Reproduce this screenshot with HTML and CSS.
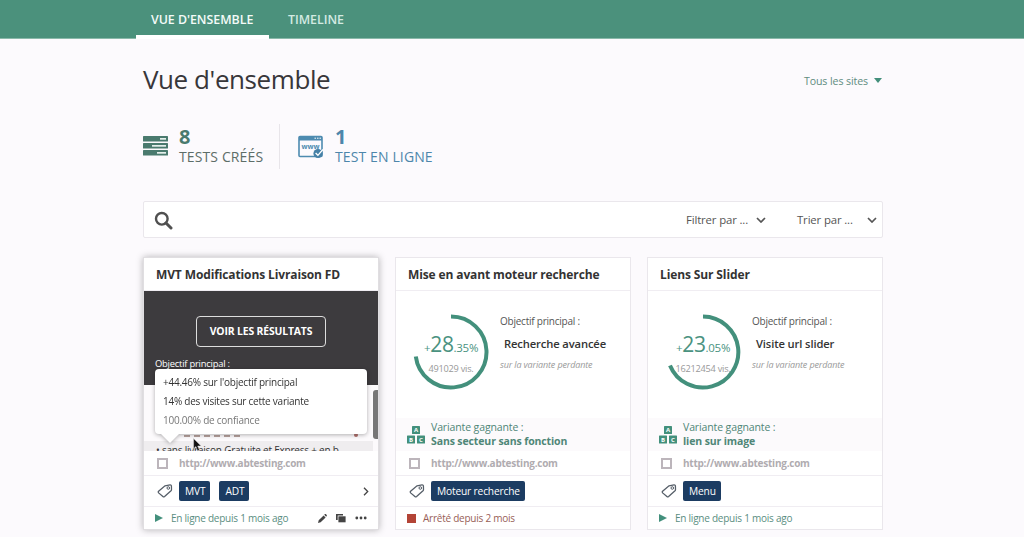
FILE: index.html
```html
<!DOCTYPE html>
<html lang="fr">
<head>
  <meta charset="UTF-8">
  <meta name="viewport" content="width=device-width, initial-scale=1.0">
  <title>Vue d'ensemble</title>
  <link rel="stylesheet" href="styles.css">
</head>
<body>
  <svg class="sprite" xmlns="http://www.w3.org/2000/svg">
    <symbol id="tag" viewBox="0 0 16 14">
      <path d="M8 1.8 13 .8q1.3-.1 1.4 1l.1 3.8q0 .7-.5 1.2L7.6 12.5q-.9.7-1.7 0L1.6 8.9q-.7-.8 0-1.6z" fill="none" stroke="currentColor" stroke-width="1.3"/>
      <circle cx="11.3" cy="4" r="1.3" fill="none" stroke="currentColor"/>
    </symbol>
    <symbol id="chevron" viewBox="0 0 10 6">
      <path d="M1 1l4 4 4-4" fill="none" stroke="currentColor" stroke-width="1.7"/>
    </symbol>
    <symbol id="play" viewBox="0 0 8 8">
      <path d="M0 0l8 4-8 4z" fill="currentColor"/>
    </symbol>
  </svg>

  <nav class="tabs">
    <a class="tab active">VUE D'ENSEMBLE</a>
    <a class="tab">TIMELINE</a>
  </nav>

  <main class="page">
    <header class="page-header">
      <h1>Vue d'ensemble</h1>
      <div class="sites">Tous les sites <span class="caret"></span></div>
    </header>

    <section class="stats">
      <div class="stat stat-total">
        <svg class="stat-icon" width="25" height="21" viewBox="0 0 25 21">
          <g fill="#4a7a6e"><rect y="1" width="25" height="5.5" rx=".6"/><rect y="8" width="25" height="5.5" rx=".6"/><rect y="15" width="25" height="5.5" rx=".6"/></g>
          <g fill="#e4efeb"><rect x="17" y="3" width="6" height="1.7"/><rect x="9" y="10" width="14" height="1.7"/><rect x="14" y="17" width="9" height="1.7"/></g>
        </svg>
        <div><strong>8</strong><span>TESTS CRÉÉS</span></div>
      </div>
      <div class="stat stat-live">
        <svg class="stat-icon" width="27" height="24" viewBox="0 0 27 24">
          <rect x="1" y="1.5" width="23" height="20" rx="1" fill="none" stroke="#4d8bb0" stroke-width="1.6"/>
          <path d="M1 1h23v4.5H1z" fill="#4d8bb0"/>
          <path d="M16.5 3.2h1.5m1 0h1.5m1 0H23" stroke="#fff" stroke-width="1"/>
          <text x="12.5" y="13.5" text-anchor="middle" class="www">www</text>
          <circle cx="20" cy="18.5" r="4.6" fill="#4580a6"/>
          <path d="M17.6 18l2.3 2.3 5-5.8" fill="none" stroke="#fff" stroke-width="1.3"/>
        </svg>
        <div><strong>1</strong><span>TEST EN LIGNE</span></div>
      </div>
    </section>

    <section class="search">
      <svg class="magnifier" width="19" height="19" viewBox="0 0 19 19"><circle cx="7.8" cy="7.8" r="5.8" fill="none" stroke="#505050" stroke-width="2.4"/><path d="M12 12l5 5" stroke="#505050" stroke-width="3" stroke-linecap="round"/></svg>
      <div class="select filter">Filtrer par ... <svg width="10" height="6"><use href="#chevron"/></svg></div>
      <div class="select sort">Trier par ... <svg width="10" height="6"><use href="#chevron"/></svg></div>
    </section>

    <section class="cards">
      <article class="card hovered">
        <h2>MVT Modifications Livraison FD</h2>
        <div class="overlay">
          <a class="results">VOIR LES RÉSULTATS</a>
          <p>Objectif principal :</p>
        </div>
        <div class="variants">
          <div class="variant-list">
            <div class="loser"><span></span><i></i></div>
            <div class="variant">• sans livraison Gratuite et Express + en b</div>
          </div>
          <div class="scrollbar"></div>
        </div>
        <div class="url"><span class="box"></span>http://www.abtesting.com</div>
        <div class="tags">
          <svg class="tag-icon" width="16" height="14"><use href="#tag"/></svg>
          <span class="tag">MVT</span><span class="tag">ADT</span>
          <svg class="next" width="6" height="9" viewBox="0 0 6 9"><path d="M1 .8l3.7 3.7L1 8.2" fill="none" stroke="#444" stroke-width="1.3"/></svg>
        </div>
        <div class="status online">
          <svg class="state" width="8" height="8"><use href="#play"/></svg>En ligne depuis 1 mois ago
          <div class="tools">
            <svg width="9" height="9" viewBox="0 0 9 9"><path d="M0 9l.7-2.7L5.6 1.4l2 2L2.7 8.3zM6.2.8L7 0q.6-.2 1.1.3l.6.6q.4.5 0 1l-.6.9z" fill="#444"/></svg>
            <svg width="10" height="9" viewBox="0 0 10 9"><path d="M0 0h7v1.6H1.7V6H0z" fill="#444"/><rect x="2.4" y="2.3" width="7.2" height="6" fill="#444"/></svg>
            <svg width="12" height="4" viewBox="0 0 12 4"><g fill="#444"><circle cx="1.8" cy="2" r="1.4"/><circle cx="6" cy="2" r="1.4"/><circle cx="10.2" cy="2" r="1.4"/></g></svg>
          </div>
        </div>
        <div class="tooltip">
          <p>+44.46% sur l'objectif principal</p>
          <p>14% des visites sur cette variante</p>
          <p class="confidence">100.00% de confiance</p>
        </div>
        <svg class="cursor" width="9" height="14" viewBox="0 0 9 14"><path d="M.6.6v10.2l2.3-2.2 1.7 4.3 1.9-.8-1.8-4.1h3.4z" fill="#111" stroke="#ddd" stroke-width=".5"/></svg>
      </article>

      <article class="card">
        <h2>Mise en avant moteur recherche</h2>
        <div class="goal">
          <div class="ring">
            <svg width="76" height="76" viewBox="0 0 76 76"><path d="M38 2.5A35.5 35.5 0 1 1 2.8 42.5" fill="none" stroke="#43907c" stroke-width="4"/></svg>
            <div class="gain">+<b>28</b><i>.35%</i></div>
            <div class="visits">491029 vis.</div>
          </div>
          <div class="goal-text">
            <p>Objectif principal :</p>
            <h3>Recherche avancée</h3>
            <em>sur la variante perdante</em>
          </div>
        </div>
        <div class="winner">
          <svg width="18" height="18" viewBox="0 0 18 18"><g fill="#43907c"><rect x="5" width="8" height="8" rx=".6"/><rect y="9.5" width="8" height="8" rx=".6"/><rect x="10" y="9.5" width="8" height="8" rx=".6"/></g><g class="abc"><text x="9" y="6.4">A</text><text x="4" y="15.9">B</text><text x="14" y="15.9">C</text></g></svg>
          <p>Variante gagnante :<strong>Sans secteur sans fonction</strong></p>
        </div>
        <div class="url"><span class="box"></span>http://www.abtesting.com</div>
        <div class="tags">
          <svg class="tag-icon" width="16" height="14"><use href="#tag"/></svg>
          <span class="tag">Moteur recherche</span>
        </div>
        <div class="status stopped"><span class="state"></span>Arrêté depuis 2 mois</div>
      </article>

      <article class="card">
        <h2>Liens Sur Slider</h2>
        <div class="goal">
          <div class="ring">
            <svg width="76" height="76" viewBox="0 0 76 76"><path d="M38 2.5A35.5 35.5 0 1 1 5 51.5" fill="none" stroke="#43907c" stroke-width="4"/></svg>
            <div class="gain">+<b>23</b><i>.05%</i></div>
            <div class="visits">16212454 vis.</div>
          </div>
          <div class="goal-text">
            <p>Objectif principal :</p>
            <h3>Visite url slider</h3>
            <em>sur la variante perdante</em>
          </div>
        </div>
        <div class="winner">
          <svg width="18" height="18" viewBox="0 0 18 18"><g fill="#43907c"><rect x="5" width="8" height="8" rx=".6"/><rect y="9.5" width="8" height="8" rx=".6"/><rect x="10" y="9.5" width="8" height="8" rx=".6"/></g><g class="abc"><text x="9" y="6.4">A</text><text x="4" y="15.9">B</text><text x="14" y="15.9">C</text></g></svg>
          <p>Variante gagnante :<strong>lien sur image</strong></p>
        </div>
        <div class="url"><span class="box"></span>http://www.abtesting.com</div>
        <div class="tags">
          <svg class="tag-icon" width="16" height="14"><use href="#tag"/></svg>
          <span class="tag">Menu</span>
        </div>
        <div class="status online"><svg class="state" width="8" height="8"><use href="#play"/></svg>En ligne depuis 1 mois ago</div>
      </article>
    </section>
  </main>
</body>
</html>
```
FILE: styles.css
```css
* {
  margin: 0;
  padding: 0;
  box-sizing: border-box;
}

body {
  font-family: "Open Sans", "Noto Sans", sans-serif;
  background: #fcfafd;
  color: #333;
  height: 537px;
  overflow: hidden;
}

svg {
  display: block;
  flex: none;
}

.sprite {
  width: 0;
  height: 0;
  position: absolute;
}

.tabs {
  height: 39px;
  padding-left: 136px;
  background: #4b917c;
  border-bottom: 1px solid #8ab9aa;
  display: flex;
}

.tab {
  height: 39px;
  padding: 0 15px;
  font-size: 12.4px;
  font-weight: 600;
  line-height: 39px;
  letter-spacing: -0.03px;
  color: #d3eae2;
  white-space: nowrap;
}

.tab.active {
  width: 133px;
  margin-right: 4px;
  color: #f4fbf8;
  border-bottom: 4px solid #fff;
}

.page {
  width: 740px;
  margin-left: 143px;
}

.page-header {
  height: 82px;
  display: flex;
  justify-content: space-between;
  align-items: center;
}

h1 {
  margin-top: -2px;
  font-size: 26px;
  font-weight: 400;
  letter-spacing: -0.42px;
  color: #38363a;
}

.sites {
  display: flex;
  align-items: center;
  gap: 6px;
  padding: 1px 1px 0 0;
  font-size: 10.6px;
  letter-spacing: -0.1px;
  color: #5f8c80;
}

.caret {
  border: 4.5px solid transparent;
  border-top: 5px solid #438f7b;
  border-bottom: 0;
}

.stats {
  display: flex;
  height: 45px;
  margin-top: 3px;
}

.stat {
  display: flex;
  gap: 11px;
}

.stat-icon {
  margin-top: 11px;
}

.stat strong,
.stat span {
  display: block;
  white-space: nowrap;
}

.stat strong {
  font-size: 20px;
  line-height: 25px;
}

.stat span {
  font-size: 14px;
  line-height: 15px;
  letter-spacing: 0.12px;
}

.stat-total {
  width: 137px;
  border-right: 1px solid #e8e5ea;
  color: #5d6d68;
}

.stat-total strong {
  color: #4a7a6e;
}

.stat-live {
  padding-left: 18px;
  gap: 10px;
  color: #4d86ab;
}

.www {
  font: 700 7px "Open Sans", sans-serif;
  fill: #4d8bb0;
}

.search {
  height: 37px;
  margin-top: 32px;
  padding: 0 5px 0 10px;
  display: flex;
  align-items: center;
  background: #fff;
  border: 1px solid #eae7ec;
  border-radius: 2px;
  font-size: 11.4px;
  letter-spacing: -0.15px;
  color: #555;
}

.magnifier {
  margin-top: 2px;
}

.select {
  display: flex;
  align-items: center;
  justify-content: space-between;
}

.filter {
  width: 80px;
  margin-left: auto;
  margin-right: 31px;
}

.sort {
  width: 80px;
}

.cards {
  display: grid;
  grid-template-columns: repeat(3, 236px);
  gap: 16px;
  margin-top: 19px;
}

.card {
  position: relative;
  height: 273px;
  background: #fff;
  border: 1px solid #eae7ec;
}

.hovered {
  border-color: #e0dee1;
  box-shadow: 0 0 7px rgba(0, 0, 0, 0.28);
}

.card h2 {
  height: 33px;
  padding-left: 12px;
  border-bottom: 1px solid #f0edf2;
  font-size: 12px;
  letter-spacing: -0.12px;
  line-height: 33px;
  white-space: nowrap;
  color: #333;
}

.overlay {
  height: 94px;
  padding-top: 25px;
  background: #3d3b3e;
  color: #fff;
}

.results {
  display: block;
  width: 130px;
  height: 31px;
  margin: 0 auto;
  border: 1px solid #ddd;
  border-radius: 4px;
  font-size: 10.4px;
  font-weight: 700;
  letter-spacing: -0.15px;
  line-height: 29px;
  text-align: center;
}

.overlay p {
  padding: 10px 0 0 11px;
  font-size: 9.4px;
  font-weight: 500;
  letter-spacing: -0.22px;
}

.variants {
  height: 66px;
  display: flex;
  align-items: flex-end;
  background: #fcfafc;
}

.variant-list {
  flex: 1;
}

/* bottom of the row hidden under the tooltip */
.loser {
  height: 8px;
  margin-bottom: 4px;
  padding: 0 15px 0 40px;
  display: flex;
  justify-content: space-between;
  align-items: flex-end;
}

.loser span {
  width: 56px;
  height: 4px;
  border-bottom: 2px dashed #b5a09c;
}

.loser i {
  width: 4px;
  height: 4px;
  border-radius: 50%;
  background: #b0706c;
}

.variant {
  height: 10px;
  padding-left: 12px;
  overflow: hidden;
  background: #efedef;
  font-size: 10px;
  letter-spacing: -0.22px;
  line-height: 18px;
  white-space: nowrap;
}

.scrollbar {
  width: 5px;
  height: 49px;
  margin-bottom: 12px;
  border-radius: 3px 0 0 3px;
  background: #777;
}

.goal {
  height: 127px;
  padding: 22px 0 0 17px;
  display: flex;
  gap: 11px;
}

.ring {
  position: relative;
  width: 76px;
  height: 80px;
  text-align: center;
  white-space: nowrap;
}

.ring svg {
  position: absolute;
  top: 1px;
  left: 0;
}

.gain {
  padding-top: 17px;
  font-size: 11.5px;
  line-height: 28px;
  letter-spacing: -0.3px;
  color: #4a9280;
}

.gain b {
  font-size: 21px;
  font-weight: 400;
}

.gain i {
  font-style: normal;
}

.visits {
  font-size: 9.2px;
  line-height: 14px;
  letter-spacing: -0.25px;
  color: #999;
}

.goal-text p {
  font-size: 10px;
  line-height: 16px;
  letter-spacing: -0.23px;
  color: #555;
}

.goal-text h3 {
  padding: 6px 0 0 4px;
  font-size: 11.2px;
  font-weight: 600;
  letter-spacing: -0.12px;
  line-height: 18px;
}

.goal-text em {
  display: block;
  margin-top: 3px;
  font-size: 9px;
  line-height: 18px;
  letter-spacing: -0.15px;
  color: #999;
}

.winner {
  height: 33px;
  padding: 0 0 0 11px;
  display: flex;
  align-items: center;
  gap: 6px;
  background: #fcfafc;
  font-size: 10.5px;
  line-height: 14px;
  letter-spacing: -0.12px;
  color: #4f8677;
}

.winner p {
  margin-top: -2px;
}

.winner strong {
  display: block;
}

.abc {
  font: 700 6px "Open Sans", sans-serif;
  letter-spacing: 0;
  fill: #fff;
  text-anchor: middle;
}

.url {
  height: 25px;
  padding: 0 0 1px 13px;
  display: flex;
  align-items: center;
  gap: 11px;
  border-bottom: 1px solid #f0edf2;
  font-size: 10px;
  font-weight: 700;
  letter-spacing: -0.24px;
  color: #b0acb0;
}

.box {
  width: 11px;
  height: 11px;
  margin-top: 1px;
  border: 2px solid #bcb5bb;
}

.tags {
  height: 31px;
  padding: 0 9px 0 13px;
  display: flex;
  align-items: center;
  border-bottom: 1px solid #f0edf2;
}

.tag-icon {
  margin-right: 6px;
  color: #555e68;
}

.tag {
  height: 20px;
  margin-right: 9px;
  padding: 0 5px 0 6px;
  border-radius: 2px;
  background: #1c3c62;
  font-size: 10.2px;
  letter-spacing: -0.16px;
  line-height: 20px;
  color: #fff;
}

.next {
  margin-left: auto;
}

.status {
  height: 22px;
  padding: 0 11px;
  display: flex;
  align-items: center;
  gap: 8px;
  font-size: 10px;
  letter-spacing: -0.24px;
  white-space: nowrap;
}

.online {
  color: #5a8e81;
}

.online .state {
  color: #43907c;
}

.stopped {
  gap: 7px;
  color: #985e57;
}

.stopped .state {
  width: 9px;
  height: 9px;
  background: #b34436;
}

.tools {
  margin-left: auto;
  display: flex;
  align-items: center;
  gap: 9px;
}

.tooltip {
  position: absolute;
  top: 111px;
  left: 11px;
  width: 212px;
  height: 65px;
  padding: 4px 8px;
  background: #fff;
  border-radius: 4px;
  filter: drop-shadow(0 1px 2px rgba(0, 0, 0, 0.3));
  font-size: 10px;
  letter-spacing: -0.24px;
  line-height: 19px;
  white-space: nowrap;
}

.tooltip::after {
  content: "";
  position: absolute;
  top: 64px;
  left: 5px;
  border: 10px solid transparent;
  border-top-color: #fff;
  border-bottom: 0;
}

.confidence {
  color: #777;
}

.cursor {
  position: absolute;
  top: 180px;
  left: 49px;
}
```
